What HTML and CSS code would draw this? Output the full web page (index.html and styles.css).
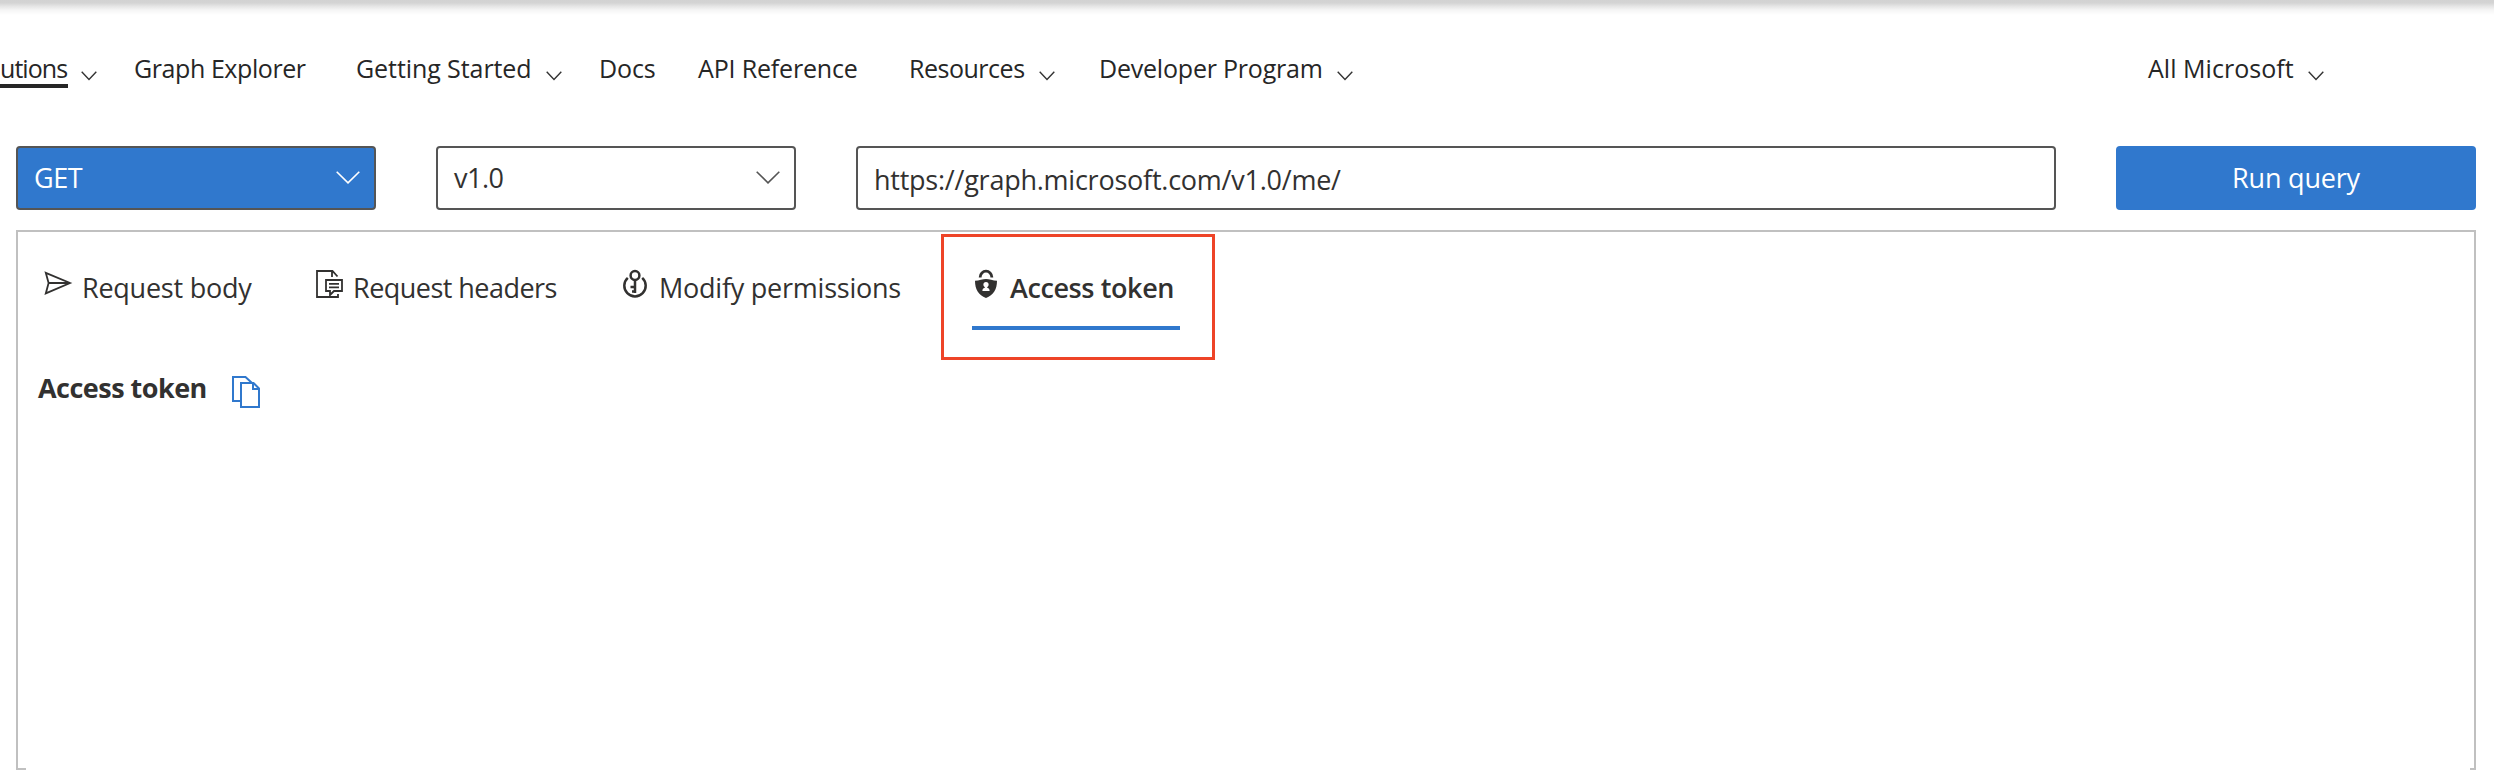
FILE: index.html
```html
<!DOCTYPE html>
<html lang="en">
<head>
<meta charset="utf-8">
<title>Graph Explorer</title>
<link rel="stylesheet" href="styles.css">
</head>
<body>
<header class="header">
  <nav class="nav">
    <a class="nav-item solutions"><span class="label current">utions</span><svg class="caret" viewBox="0 0 16 10"><path d="M.7.7 8 8.4 15.3.7"/></svg></a>
    <a class="nav-item explorer"><span class="label">Graph Explorer</span></a>
    <a class="nav-item started"><span class="label">Getting Started</span><svg class="caret" viewBox="0 0 16 10"><path d="M.7.7 8 8.4 15.3.7"/></svg></a>
    <a class="nav-item docs"><span class="label">Docs</span></a>
    <a class="nav-item api"><span class="label">API Reference</span></a>
    <a class="nav-item resources"><span class="label">Resources</span><svg class="caret" viewBox="0 0 16 10"><path d="M.7.7 8 8.4 15.3.7"/></svg></a>
    <a class="nav-item program"><span class="label">Developer Program</span><svg class="caret" viewBox="0 0 16 10"><path d="M.7.7 8 8.4 15.3.7"/></svg></a>
    <a class="nav-item all"><span class="label">All Microsoft</span><svg class="caret" viewBox="0 0 16 10"><path d="M.7.7 8 8.4 15.3.7"/></svg></a>
  </nav>
</header>
<main class="main">
  <div class="query">
    <div class="field method"><span>GET</span><svg class="chevron" viewBox="0 0 24 13"><path d="M.7.7 12 11.8 23.3.7"/></svg></div>
    <div class="field version"><span>v1.0</span><svg class="chevron" viewBox="0 0 24 13"><path d="M.7.7 12 11.8 23.3.7"/></svg></div>
    <div class="field url"><span>https://graph.microsoft.com/v1.0/me/</span></div>
    <button class="run">Run query</button>
  </div>
  <section class="panel">
    <div class="tabs">
      <div class="tab body-tab">
        <svg class="icon" width="28" height="28" viewBox="0 0 28 28"><path class="line" d="M1.8 2.8 26 13 1.8 23.4 4.6 13ZM4.6 13H26"/></svg>
        <span>Request body</span>
      </div>
      <div class="tab headers-tab">
        <svg class="icon" width="28" height="28" viewBox="0 0 28 28"><path class="line" d="M22 24v3H1V1h15.500l5 5.500M16 1v6M10 10h16v11H18l-4 4v-4h-4ZM13 13.800h10M13 17.300h10"/></svg>
        <span>Request headers</span>
      </div>
      <div class="tab modify-tab">
        <svg class="icon" width="24" height="28" viewBox="0 0 24 28"><g class="thick"><circle cx="12" cy="5.500" r="4.400"/><path d="M4.800 7.800a10.700 10.700 0 1 0 14.400 0M12 10v13M12.500 17H7.500M12.500 21.500H9"/></g></svg>
        <span>Modify permissions</span>
      </div>
      <div class="tab token-tab">
        <svg class="icon" width="22" height="28" viewBox="0 0 22 28"><path class="shackle" d="M5.200 7.500V7a5.800 5.800 0 0 1 11.600 0v.5"/><path fill="#323130" d="M0 10.800C4 10.500 8 9 11 9s7 1.500 11 1.800C22 19.500 18.500 25 11 28 3.500 25 0 19.500 0 10.800Z"/><circle cx="11" cy="14.500" r="2.600" fill="#fff"/><path fill="#fff" d="M9.800 16h2.400v1.700c1.700.4 2.400 1.400 2.400 3.300H7.400c0-1.900.7-2.900 2.400-3.300Z"/></svg>
        <span>Access token</span>
      </div>
    </div>
    <div class="token-row">
      <h2 class="title">Access token</h2>
      <svg class="copy" width="28" height="32" viewBox="0 0 28 32"><path d="M8 25H1V1h12.500L20 7M9 7h12.500L27 12.500V31H9ZM21 7v6h6"/></svg>
    </div>
  </section>
</main>
</body>
</html>
```

FILE: styles.css
```css
* { box-sizing: border-box; }
body {
  margin: 0;
  width: 2494px;
  height: 784px;
  overflow: hidden;
  background: #fff;
  color: #323130;
  font-family: "Open Sans", "Noto Sans", sans-serif;
}
.header {
  height: 146px;
  padding-top: 51px;
  background: linear-gradient(#d2d2d2 0, #d4d4d4 3px, #e4e4e4 6px, #f5f5f5 10px, #fff 15px);
}
.nav {
  display: grid;
  grid-template-columns: 134px 222px 243px 99px 211px 190px 1049px 1fr;
  font-size: 25px;
  line-height: 34px;
  letter-spacing: -.33px;
  color: #262626;
  white-space: nowrap;
}
.nav-item { display: flex; align-items: flex-start; }
.solutions { width: 97px; letter-spacing: -.95px; }
.explorer { letter-spacing: -.42px; }
.started { letter-spacing: -.08px; }
.docs { letter-spacing: -.1px; }
.api { letter-spacing: -.17px; }
.resources { letter-spacing: -.48px; }
.program { letter-spacing: -.21px; }
.all { letter-spacing: .04px; }
.label { flex: none; }
.current { width: 68px; height: 37px; border-bottom: 4px solid #262626; }
.caret {
  flex: none;
  width: 16px;
  height: 10px;
  margin: 20px 0 0 14px;
  fill: none;
  stroke: #333;
  stroke-width: 1.4;
}
.solutions .caret { margin-left: 13px; }
.main { padding: 0 18px 0 16px; }
.query {
  display: grid;
  grid-template-columns: 360px 360px 1200px 360px;
  gap: 60px;
  height: 64px;
  font-size: 27px;
}
.field {
  display: flex;
  align-items: center;
  justify-content: space-between;
  padding: 0 14px 2px 16px;
  border: 2px solid #555;
  border-radius: 4px;
}
.field span { letter-spacing: -.5px; }
.chevron { width: 24px; height: 13px; fill: none; stroke: #555; stroke-width: 1.6; }
.method { background: #3078cd; color: #fff; }
.method .chevron { stroke: #fff; }
.url { padding: 2px 0 0 16px; }
.url span { letter-spacing: -.24px; }
.run {
  padding: 0 0 2px;
  border: 0;
  border-radius: 4px;
  background: #3078cd;
  color: #fff;
  font: inherit;
  letter-spacing: -.2px;
}
.panel {
  height: 540px;
  margin-top: 20px;
  border: 2px solid #c0c0c0;
  border-bottom: 0;
  background:
    linear-gradient(#c0c0c0, #c0c0c0) left bottom / 8px 2px no-repeat,
    linear-gradient(#c0c0c0, #c0c0c0) right bottom / 4px 2px no-repeat;
}
.tabs {
  display: grid;
  grid-template-columns: 272px 307px 318px 280px;
  padding-left: 26px;
  font-size: 27px;
  line-height: 36px;
  white-space: nowrap;
}
.tab { display: flex; padding-top: 38px; letter-spacing: -.24px; }
.icon { flex: none; overflow: visible; }
.line, .thick { fill: none; stroke: #323130; stroke-width: 1.8; }
.thick { stroke-width: 2.5; }
.shackle { fill: none; stroke: #323130; stroke-width: 2.8; }
.body-tab span { margin-left: 10px; }
.headers-tab { letter-spacing: -.53px; }
.headers-tab span { margin-left: 9px; }
.modify-tab span { margin-left: 12px; }
.token-tab {
  width: 274px;
  height: 126px;
  margin-top: 2px;
  padding: 33px 0 0 31px;
  border: 3px solid #ee4428;
  font-weight: 600;
  letter-spacing: -.4px;
  position: relative;
}
.token-tab span { margin-left: 13px; }
.token-tab::after {
  content: "";
  position: absolute;
  left: 28px;
  top: 89px;
  width: 208px;
  height: 4px;
  background: #3078cd;
}
.token-row { display: flex; padding: 10px 0 0 20px; }
.title { margin: 0; font-size: 27px; line-height: 36px; font-weight: 700; letter-spacing: -.52px; }
.copy { margin: 6px 0 0 25px; fill: none; stroke: #3078cd; stroke-width: 2; }
```
